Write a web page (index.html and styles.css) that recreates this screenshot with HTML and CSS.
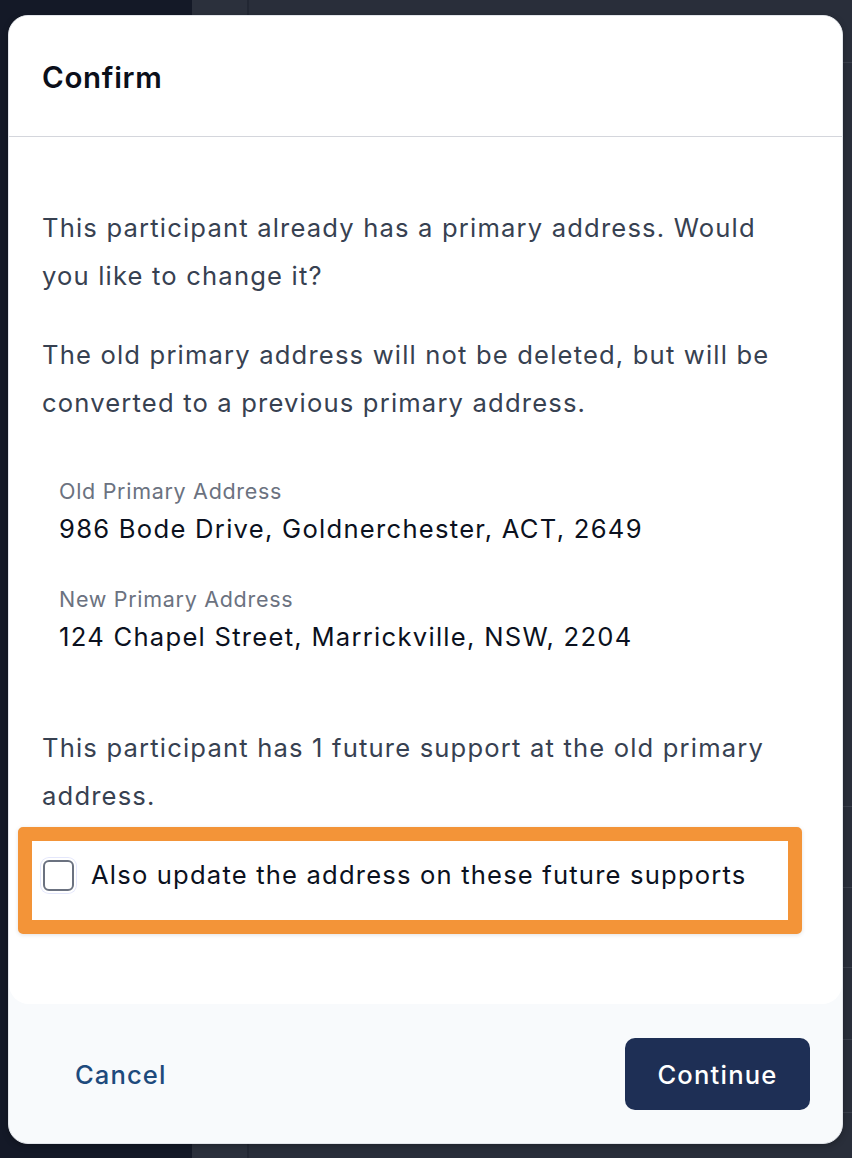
FILE: index.html
```html
<!DOCTYPE html>
<html lang="en">
<head>
<meta charset="utf-8">
<title>Confirm</title>
<link rel="stylesheet" href="styles.css">
</head>
<body>
<div class="app">
  <aside class="sidebar"></aside>
  <main class="main">
    <div class="main-strip"></div>
    <div class="main-content">
      <div class="bg-row bg-r1"></div>
      <div class="bg-row bg-r2"></div>
      <div class="bg-row bg-r3"></div>
      <div class="bg-row bg-r4"></div>
      <div class="bg-row bg-r5"></div>
      <div class="bg-row bg-r6"></div>
    </div>
  </main>
</div>

<div class="modal" role="dialog" aria-labelledby="modal-title">
  <header class="modal-header">
    <h2 id="modal-title" class="modal-title">Confirm</h2>
  </header>
  <section class="modal-body">
    <p class="para">This participant already has a primary address. Would you like to change it?</p>
    <p class="para para-gap">The old primary address will not be deleted, but will be converted to a previous primary address.</p>
    <div class="addresses">
      <div class="addr">
        <div class="addr-label">Old Primary Address</div>
        <div class="addr-value">986 Bode Drive, Goldnerchester, ACT, 2649</div>
      </div>
      <div class="addr">
        <div class="addr-label">New Primary Address</div>
        <div class="addr-value">124 Chapel Street, Marrickville, NSW, 2204</div>
      </div>
    </div>
    <p class="para para-support">This participant has 1 future support at the old primary address.</p>
    <div class="highlight">
      <label class="check-row">
        <span class="checkbox"></span>
        <span class="check-label">Also update the address on these future supports</span>
      </label>
    </div>
  </section>
  <footer class="modal-footer">
    <button class="btn-cancel" type="button">Cancel</button>
    <button class="btn-continue" type="button">Continue</button>
  </footer>
</div>
</body>
</html>
```

FILE: styles.css
```css
* { box-sizing: border-box; }

html, body {
  margin: 0;
  padding: 0;
  width: 852px;
  height: 1158px;
  overflow: hidden;
  font-family: Inter, "Noto Sans", "Liberation Sans", sans-serif;
}

.app {
  display: flex;
  width: 852px;
  height: 1158px;
  background: #292e3a;
}

.sidebar {
  width: 192px;
  flex: none;
  background: #141927;
}

.main {
  flex: 1;
  display: flex;
}

.main-strip {
  width: 57px;
  flex: none;
  background: #2b303c;
  border-right: 2px solid #222733;
}

.main-content {
  flex: 1;
  display: flex;
  flex-direction: column;
}

.bg-row { border-bottom: 1px solid #3a3f4b; }
.bg-r1 { height: 63px; }
.bg-r2 { height: 744px; }
.bg-r3 { height: 81px; }
.bg-r4 { height: 80px; }
.bg-r5 { height: 72px; }
.bg-r6 { height: 73px; }

.modal {
  position: absolute;
  left: 8px;
  top: 15px;
  width: 835px;
  height: 1129px;
  background: #f8fafc;
  border: 1px solid #e2e5ea;
  border-radius: 20px;
  box-shadow: 0 2px 6px rgba(0, 0, 0, 0.25);
  display: flex;
  flex-direction: column;
  overflow: hidden;
}

.modal-header {
  height: 121px;
  flex: none;
  background: #ffffff;
  border-bottom: 1px solid #d4d6dc;
  display: flex;
  align-items: center;
  padding: 0 33px;
}

.modal-title {
  margin: 0;
  padding-top: 2px;
  font-size: 29.5px;
  font-weight: 600;
  letter-spacing: 0.7px;
  color: #0b0f1a;
}

.modal-body {
  background: #ffffff;
  border-radius: 0 0 20px 20px;
  padding: 67px 50px 70px 33px;
}

.para {
  margin: 0;
  font-size: 25.6px;
  line-height: 48px;
  letter-spacing: 1.17px;
  color: #374151;
}

.para-gap { margin-top: 31px; }

.addresses {
  margin-top: 47px;
  padding-left: 17px;
  display: flex;
  flex-direction: column;
  gap: 32px;
}

.addr-label {
  font-size: 21.5px;
  line-height: 34px;
  letter-spacing: 0.7px;
  color: #6b7280;
}

.addr-value {
  font-size: 25.6px;
  line-height: 42px;
  letter-spacing: 1.27px;
  color: #0b1120;
}

.para-support { margin-top: 66px; }

.highlight {
  margin: 7px -10px 0 -24px;
  border: 14px solid #f39438;
  border-radius: 5px;
  background: #ffffff;
  padding: 10px 0 21px 11px;
  box-shadow: 0 1px 4px rgba(0, 0, 0, 0.12);
}

.check-row {
  display: flex;
  align-items: center;
  gap: 17px;
  line-height: 48px;
}

.checkbox {
  width: 31px;
  height: 31px;
  flex: none;
  border: 2px solid #6b7280;
  border-radius: 6px;
  background: #ffffff;
  box-shadow: 0 0 0 2px #ffffff, 0 0 0 3px #e4e7fb;
}

.check-label {
  font-size: 25.6px;
  letter-spacing: 1.18px;
  color: #0b1120;
}

.modal-footer {
  flex: 1;
  display: flex;
  justify-content: space-between;
  align-items: flex-start;
  padding: 34px 32px 0 33px;
}

.btn-cancel {
  height: 72px;
  padding: 0 33px;
  border: none;
  background: transparent;
  font-family: inherit;
  font-size: 25.6px;
  font-weight: 500;
  letter-spacing: 1.1px;
  color: #1e4a7c;
  cursor: pointer;
}

.btn-continue {
  width: 185px;
  height: 72px;
  border: none;
  border-radius: 10px;
  background: #1e2f55;
  font-family: inherit;
  font-size: 25.6px;
  font-weight: 500;
  letter-spacing: 1.2px;
  color: #ffffff;
  cursor: pointer;
}
```
